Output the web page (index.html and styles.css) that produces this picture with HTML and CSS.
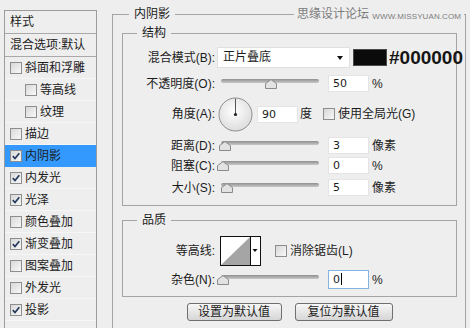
FILE: index.html
```html
<!DOCTYPE html>
<html lang="zh-CN">
<head>
<meta charset="utf-8">
<title>图层样式 - 内阴影</title>
<link rel="stylesheet" href="styles.css">
</head>
<body>
<div class="dialog">
  <aside class="styles-list">
    <div class="list-head">样式</div>
    <div class="list-head">混合选项:默认</div>
    <div class="item"><span class="cb"></span>斜面和浮雕</div>
    <div class="item sub"><span class="cb"></span>等高线</div>
    <div class="item sub"><span class="cb"></span>纹理</div>
    <div class="item"><span class="cb"></span>描边</div>
    <div class="item active"><span class="cb"><svg viewBox="0 0 10 10"><path d="M1.8 5.2 4 7.5 8.3 2.2" fill="none" stroke="#233a5e" stroke-width="1.7"/></svg></span>内阴影</div>
    <div class="item"><span class="cb"><svg viewBox="0 0 10 10"><path d="M1.8 5.2 4 7.5 8.3 2.2" fill="none" stroke="#233a5e" stroke-width="1.7"/></svg></span>内发光</div>
    <div class="item"><span class="cb"><svg viewBox="0 0 10 10"><path d="M1.8 5.2 4 7.5 8.3 2.2" fill="none" stroke="#233a5e" stroke-width="1.7"/></svg></span>光泽</div>
    <div class="item"><span class="cb"></span>颜色叠加</div>
    <div class="item"><span class="cb"><svg viewBox="0 0 10 10"><path d="M1.8 5.2 4 7.5 8.3 2.2" fill="none" stroke="#233a5e" stroke-width="1.7"/></svg></span>渐变叠加</div>
    <div class="item"><span class="cb"></span>图案叠加</div>
    <div class="item"><span class="cb"></span>外发光</div>
    <div class="item"><span class="cb"><svg viewBox="0 0 10 10"><path d="M1.8 5.2 4 7.5 8.3 2.2" fill="none" stroke="#233a5e" stroke-width="1.7"/></svg></span>投影</div>
  </aside>

  <main class="panel">
    <fieldset class="group outer">
      <legend>内阴影</legend>

      <fieldset class="group inner structure">
        <legend>结构</legend>

        <div class="row r-blend">
          <span class="label">混合模式(B):</span>
          <div class="select">正片叠底<span class="arrow"></span></div>
          <span class="swatch"></span>
          <span class="hex">#000000</span>
        </div>

        <div class="row r-opacity">
          <span class="label">不透明度(O):</span>
          <div class="slider"><div class="track"></div><svg class="thumb" style="left:48px" viewBox="0 0 12 10"><path d="M6 .6 11.5 4.6V9.5H.5V4.6Z" fill="#e2e2e2" stroke="#8a8a8a"/></svg></div>
          <span class="field">50</span>
          <span class="unit">%</span>
        </div>

        <div class="row r-angle">
          <span class="label">角度(A):</span>
          <svg class="dial" viewBox="0 0 35 35">
            <defs><radialGradient id="dialfill" cx="45%" cy="40%" r="65%"><stop offset="0" stop-color="#ffffff"/><stop offset="1" stop-color="#dadada"/></radialGradient></defs>
            <circle cx="17.5" cy="17.5" r="16.5" fill="url(#dialfill)" stroke="#8e8e8e"/>
            <line x1="17.5" y1="1.5" x2="17.5" y2="17.5" stroke="#555" stroke-width="1"/>
            <circle cx="17.5" cy="17.5" r="1.6" fill="#222"/>
          </svg>
          <span class="field">90</span>
          <span class="unit deg">度</span>
          <span class="cb cb-global"></span>
          <span class="cb-text">使用全局光(G)</span>
        </div>

        <div class="row r-distance">
          <span class="label">距离(D):</span>
          <div class="slider"><div class="track"></div><svg class="thumb" style="left:2px" viewBox="0 0 12 10"><path d="M6 .6 11.5 4.6V9.5H.5V4.6Z" fill="#e2e2e2" stroke="#8a8a8a"/></svg></div>
          <span class="field">3</span>
          <span class="unit">像素</span>
        </div>

        <div class="row r-choke">
          <span class="label">阻塞(C):</span>
          <div class="slider"><div class="track"></div><svg class="thumb" style="left:0px" viewBox="0 0 12 10"><path d="M6 .6 11.5 4.6V9.5H.5V4.6Z" fill="#e2e2e2" stroke="#8a8a8a"/></svg></div>
          <span class="field">0</span>
          <span class="unit">%</span>
        </div>

        <div class="row r-size">
          <span class="label">大小(S):</span>
          <div class="slider"><div class="track"></div><svg class="thumb" style="left:4px" viewBox="0 0 12 10"><path d="M6 .6 11.5 4.6V9.5H.5V4.6Z" fill="#e2e2e2" stroke="#8a8a8a"/></svg></div>
          <span class="field">5</span>
          <span class="unit">像素</span>
        </div>
      </fieldset>

      <fieldset class="group inner quality">
        <legend>品质</legend>

        <div class="row r-contour">
          <span class="label">等高线:</span>
          <svg class="contour" viewBox="0 0 41 30">
            <rect x=".5" y=".5" width="40" height="29" fill="#fff" stroke="#111"/>
            <path d="M1 29 30 1V29Z" fill="#a5a5a5"/>
            <line x1="30.5" y1="0" x2="30.5" y2="30" stroke="#111"/>
            <path d="M32.5 13h5l-2.5 3z" fill="#111"/>
          </svg>
          <span class="cb cb-aa"></span>
          <span class="cb-text">消除锯齿(L)</span>
        </div>

        <div class="row r-noise">
          <span class="label">杂色(N):</span>
          <div class="slider"><div class="track"></div><svg class="thumb" style="left:0px" viewBox="0 0 12 10"><path d="M6 .6 11.5 4.6V9.5H.5V4.6Z" fill="#e2e2e2" stroke="#8a8a8a"/></svg></div>
          <span class="field focus">0<span class="caret"></span></span>
          <span class="unit">%</span>
        </div>
      </fieldset>

      <div class="buttons">
        <button class="btn btn-set">设置为默认值</button>
        <button class="btn btn-reset">复位为默认值</button>
      </div>
    </fieldset>
  </main>
</div>

<div class="watermark">思缘设计论坛 <span class="wm-url">WWW.MISSYUAN.COM</span></div>
</body>
</html>
```

FILE: styles.css
```css
* { box-sizing: border-box; }

html, body { margin: 0; padding: 0; }

body {
  width: 470px;
  height: 328px;
  overflow: hidden;
  position: relative;
  background: #eeeeee;
  color: #1c1c1c;
  font-family: "Liberation Sans", "Noto Sans CJK SC", sans-serif;
  font-size: 12px;
  line-height: 16px;
}

.dialog {
  display: flex;
  align-items: flex-start;
  padding-left: 4px;
  height: 328px;
}

/* ---------- left style list ---------- */
.styles-list {
  flex: none;
  width: 93px;
  height: 318px;
  margin-top: 10px;
  border: 1px solid #9c9c9c;
  border-bottom: none;
}

.list-head {
  height: 23px;
  line-height: 22px;
  padding-left: 5px;
  border-bottom: 1px solid #a9a9a9;
}

.item {
  height: 22px;
  display: flex;
  align-items: center;
  gap: 3px;
  padding-left: 5px;
  border-bottom: 1px solid #f6f6f6;
}

.item.sub { padding-left: 20px; }

.item.active { background: #3399ff; border-bottom-color: #3399ff; }

.cb {
  flex: none;
  width: 12px;
  height: 12px;
  border: 1px solid #8e8e8e;
  background: linear-gradient(135deg, #d8d8d8, #f8f8f8);
  display: flex;
  align-items: center;
  justify-content: center;
}

.cb svg { width: 10px; height: 10px; display: block; }

/* ---------- right panel ---------- */
.panel {
  flex: none;
  width: 354px;
  margin-left: 15px;
  margin-top: 6px;
}

fieldset { margin: 0; min-width: 0; }

.group legend {
  padding: 0 5px;
  height: 16px;
  line-height: 16px;
}

.outer {
  height: 322px;
  border: 1px solid #a4a4a4;
  border-bottom: none;
  padding: 3px 8px 0 9px;
}

.outer > legend { margin-left: 7px; }

.inner {
  border: 1px solid #a4a4a4;
  padding: 0;
}

.inner > legend { margin-left: 14px; }

.structure { padding-top: 6px; padding-bottom: 9px; }

.quality { margin-top: 6px; padding-top: 8px; padding-bottom: 7px; }

.row {
  display: flex;
  align-items: center;
}

.label {
  flex: none;
  width: 92px;
  margin-right: 2px;
  text-align: right;
  white-space: nowrap;
}

/* blend mode row */
.r-blend { height: 21px; }

.select {
  flex: none;
  width: 133px;
  height: 21px;
  line-height: 19px;
  padding-left: 5px;
  background: #fff;
  border: 1px solid #e0e0e0;
  display: flex;
  align-items: center;
  justify-content: space-between;
  padding-right: 6px;
}

.arrow {
  width: 0;
  height: 0;
  border-left: 3.5px solid transparent;
  border-right: 3.5px solid transparent;
  border-top: 4px solid #111;
}

.swatch {
  flex: none;
  width: 34px;
  height: 17px;
  margin-left: 3px;
  background: #0b0b0b;
  border: 1px solid #4a4a4a;
}

.hex {
  margin-left: 2px;
  font-family: "Liberation Sans", sans-serif;
  font-weight: bold;
  font-size: 19px;
  line-height: 21px;
  color: #151515;
  white-space: nowrap;
}

/* slider rows */
.r-opacity { margin-top: 7px; height: 17px; }
.r-angle { margin-top: 5px; height: 34px; }
.r-distance { margin-top: 6px; height: 17px; }
.r-choke { margin-top: 3px; height: 17px; }
.r-size { margin-top: 5px; height: 17px; }

.slider {
  flex: none;
  position: relative;
  width: 106px;
  height: 17px;
}

.track {
  margin: 4px 4px 0;
  height: 4px;
  border-radius: 2px;
  background: linear-gradient(#8f8f8f, #c9c9c9);
}

.thumb {
  position: absolute;
  top: 4px;
  width: 12px;
  height: 10px;
}

.field {
  flex: none;
  width: 41px;
  height: 17px;
  margin-left: 5px;
  padding-left: 4px;
  line-height: 15px;
  background: #fff;
  border: 1px solid #e4e4e4;
  font-family: "DejaVu Sans", "Liberation Sans", sans-serif;
  font-size: 11px;
}

.field.focus { border-color: #86b4e2; }

.caret {
  display: inline-block;
  width: 1px;
  height: 12px;
  margin-left: 1px;
  vertical-align: -2px;
  background: #000;
}

.unit { margin-left: 3px; white-space: nowrap; }

/* angle row */
.dial {
  flex: none;
  width: 35px;
  height: 35px;
  margin-left: 1px;
}

.r-angle .field { margin-left: 4px; }

.deg { margin-left: 2px; }

.cb-global { margin-left: 11px; }

.cb-text { margin-left: 3px; white-space: nowrap; }

/* quality */
.r-contour { height: 30px; }

.contour {
  flex: none;
  width: 41px;
  height: 30px;
  margin-left: 3px;
}

.cb-aa { margin-left: 14px; }

.r-noise { margin-top: 4px; height: 19px; }
.r-noise .field { height: 19px; line-height: 17px; }

/* buttons */
.buttons {
  display: flex;
  justify-content: center;
  gap: 13px;
  margin-top: 6px;
}

.btn {
  height: 18px;
  padding: 0;
  border: 1px solid #6f6f6f;
  border-radius: 3px;
  background: linear-gradient(#f7f7f7, #e6e6e6 50%, #d6d6d6);
  font-family: "Liberation Sans", "Noto Sans CJK SC", sans-serif;
  font-size: 12px;
  line-height: 16px;
  color: #1c1c1c;
}

.btn-set { width: 95px; }
.btn-reset { width: 98px; }

/* watermark overlay */
.watermark {
  position: absolute;
  top: 6px;
  left: 294px;
  padding: 0 3px;
  background: #eeeeee;
  color: #7c7c7c;
  font-size: 12px;
  line-height: 16px;
  white-space: nowrap;
}

.wm-url {
  font-family: "Liberation Sans", sans-serif;
  font-size: 8px;
  letter-spacing: 0.1px;
  vertical-align: -1px;
}
```
